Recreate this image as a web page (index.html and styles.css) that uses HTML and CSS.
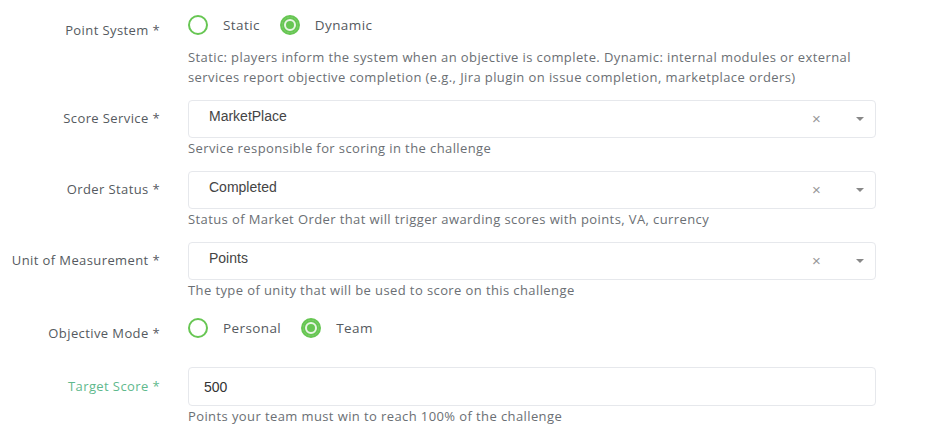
FILE: index.html
```html
<!DOCTYPE html>
<html lang="en">
<head>
<meta charset="utf-8">
<title>Challenge scoring</title>
<link rel="stylesheet" href="styles.css">
</head>
<body>
<form class="form">
  <div class="row row-radio">
    <div class="label">Point System *</div>
    <div class="field">
      <div class="radios">
        <label class="radio"><span class="circle"></span><span class="rtext">Static</span></label>
        <label class="radio checked"><span class="circle"></span><span class="rtext">Dynamic</span></label>
      </div>
      <div class="help help-top">Static: players inform the system when an objective is complete. Dynamic: internal modules or external services report objective completion (e.g., Jira plugin on issue completion, marketplace orders)</div>
    </div>
  </div>

  <div class="row row-select">
    <div class="label">Score Service *</div>
    <div class="field">
      <div class="select"><span class="value">MarketPlace</span><span class="clear">×</span><span class="caret"></span></div>
      <div class="help">Service responsible for scoring in the challenge</div>
    </div>
  </div>

  <div class="row row-select">
    <div class="label">Order Status *</div>
    <div class="field">
      <div class="select"><span class="value">Completed</span><span class="clear">×</span><span class="caret"></span></div>
      <div class="help">Status of Market Order that will trigger awarding scores with points, VA, currency</div>
    </div>
  </div>

  <div class="row row-select">
    <div class="label">Unit of Measurement *</div>
    <div class="field">
      <div class="select"><span class="value">Points</span><span class="clear">×</span><span class="caret"></span></div>
      <div class="help">The type of unity that will be used to score on this challenge</div>
    </div>
  </div>

  <div class="row row-radio row-mode">
    <div class="label">Objective Mode *</div>
    <div class="field">
      <div class="radios">
        <label class="radio"><span class="circle"></span><span class="rtext">Personal</span></label>
        <label class="radio checked"><span class="circle"></span><span class="rtext">Team</span></label>
      </div>
    </div>
  </div>

  <div class="row row-input">
    <div class="label label-active">Target Score *</div>
    <div class="field">
      <div class="input">500</div>
      <div class="help">Points your team must win to reach 100% of the challenge</div>
    </div>
  </div>
</form>
</body>
</html>
```
FILE: styles.css
```css
html, body {
  margin: 0;
  padding: 0;
  background: #ffffff;
}
body {
  font-family: "Open Sans", "DejaVu Sans", sans-serif;
  font-size: 13px;
  letter-spacing: 0.4px;
  color: #555a60;
}
.form {
  padding-top: 15px;
}
.row {
  display: grid;
  grid-template-columns: 160px 688px;
  column-gap: 28px;
  margin-bottom: 13px;
}
.label {
  text-align: right;
  line-height: 20px;
  padding-top: 8px;
  color: #555a60;
  font-size: 13px;
}
.row-radio .label {
  padding-top: 5px;
}
.row-input .label {
  padding-top: 9px;
}
.label-active {
  color: #5fb98d;
}
.radios {
  display: flex;
  align-items: center;
  height: 20px;
  gap: 20px;
}
.radio {
  display: flex;
  align-items: center;
  gap: 15px;
}
.circle {
  width: 20px;
  height: 20px;
  box-sizing: border-box;
  border: 2px solid #67c653;
  border-radius: 50%;
  background: #fff;
}
.radio.checked .circle {
  background: #67c653;
  box-shadow: inset 0 0 0 2px #67c653, inset 0 0 0 4px #e8f5e4;
}
.rtext {
  font-size: 13.5px;
  color: #555a60;
  line-height: 20px;
}
.help {
  line-height: 20px;
  color: #6b6f74;
  font-size: 13px;
}
.help-top {
  margin-top: 12px;
}
.select, .input {
  height: 38px;
  box-sizing: border-box;
  border: 1px solid #e6e8ec;
  border-radius: 4px;
  display: flex;
  align-items: center;
  font-family: "Liberation Sans", Arial, sans-serif;
  font-size: 14px;
  letter-spacing: 0;
  color: #444;
}
.select {
  padding-left: 20px;
}
.value {
  flex: 1;
  margin-top: -6px;
}
.clear {
  color: #999;
  font-size: 15px;
  width: 20px;
  margin-right: 24px;
  margin-top: -2px;
}
.caret {
  width: 0;
  height: 0;
  border-left: 4px solid transparent;
  border-right: 4px solid transparent;
  border-top: 4px solid #888;
  margin-right: 11px;
}
.row-mode {
  margin-top: 18px;
  margin-bottom: 24px;
}
.input {
  height: 39px;
  padding-left: 15px;
  color: #333;
}
```
